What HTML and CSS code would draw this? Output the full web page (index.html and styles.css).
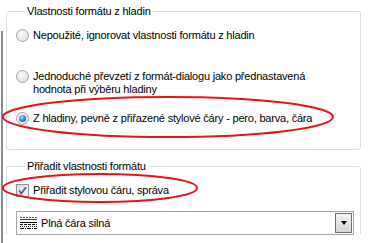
FILE: index.html
```html
<!DOCTYPE html>
<html>
<head>
<meta charset="utf-8">
<link rel="stylesheet" href="styles.css">
</head>
<body>
<div class="edge"></div>
<div class="page">
  <fieldset class="group g1">
    <legend>Vlastnosti formátu z hladin</legend>
    <div class="opt o1"><span class="radio"></span><span class="lbl">Nepoužité, ignorovat vlastnosti formátu z hladin</span></div>
    <div class="opt o2"><span class="radio"></span><span class="lbl">Jednoduché převzetí z formát-dialogu jako přednastavená<br>hodnota při výběru hladiny</span></div>
    <div class="opt o3"><span class="radio on"></span><span class="lbl">Z hladiny, pevně z přiřazené stylové čáry - pero, barva, čára</span></div>
  </fieldset>
  <fieldset class="group g2">
    <legend>Přiřadit vlastnosti formátu</legend>
    <div class="opt o4"><span class="check"><svg width="13" height="13" viewBox="0 0 13 13"><path d="M3 6.5 L5.3 9.5 L10 3.2" fill="none" stroke="#4a5fa8" stroke-width="1.8"/></svg></span><span class="lbl">Přiřadit stylovou čáru, správa</span></div>
    <div class="combo">
      <span class="ico"><svg width="17" height="14" viewBox="0 0 17 14">
        <path d="M0 1.5 H17" stroke="#d02020" stroke-dasharray="2 1"/>
        <path d="M0 3.5 H17" stroke="#2040c0"/>
        <path d="M0 6.5 H17" stroke="#101010"/>
        <path d="M0 8.5 H17" stroke="#101010" stroke-dasharray="3 1"/>
        <path d="M0 10.5 H17" stroke="#101010" stroke-dasharray="1 1"/>
        <path d="M0 12.5 H17" stroke="#101010" stroke-dasharray="4 1 1 1"/>
      </svg></span>
      <span class="val">Plná čára silná</span>
      <span class="btn"><span class="tri"></span></span>
    </div>
  </fieldset>
</div>
<svg class="marks" width="371" height="243" viewBox="0 0 371 243">
  <ellipse cx="168" cy="117" rx="165" ry="20" fill="none" stroke="#e8141b" stroke-width="2"/>
  <ellipse cx="100" cy="188" rx="97" ry="14" fill="none" stroke="#e8141b" stroke-width="2"/>
</svg>
</body>
</html>
```
FILE: styles.css
```css
html, body { margin: 0; padding: 0; background: #fff; }
body {
  width: 371px; height: 243px; overflow: hidden; position: relative;
  font-family: Tahoma, "Liberation Sans", Arial, sans-serif;
  font-size: 11px; letter-spacing: -0.2px; color: #000;
}
.edge {
  position: absolute; left: 1px; top: 31px; bottom: 0; width: 2px; background: #8c8c8c;
}
.page { padding: 5px 10px 0 6px; }
.group {
  margin: 0; border: 1px solid #d5dfe5; border-radius: 3px;
  padding: 0 6px 0 9px; min-width: 0;
}
.group legend { padding: 0 2px; margin-left: 9px; line-height: 13px; }
.g1 { padding-top: 11px; padding-bottom: 24px; }
.g2 { margin-top: 10px; padding-top: 11px; height: 62px; border-bottom: none; border-radius: 3px 3px 0 0; }
.opt { display: flex; align-items: flex-start; line-height: 13px; }
.opt .lbl { margin-left: 4px; }
.o2 { margin-top: 28px; }
.o3 { margin-top: 16px; }
.radio {
  width: 11px; height: 11px; border-radius: 50%; flex: none;
  border: 1px solid #a4a4a4;
  background: radial-gradient(circle at 40% 35%, #fcfcfc 0, #e6e6e6 60%, #d6d6d6 100%);
  position: relative;
}
.radio.on::after {
  content: ""; position: absolute; left: 2px; top: 2px; width: 7px; height: 7px; border-radius: 50%;
  background: radial-gradient(circle at 40% 35%, #a6e0ff 0, #2a8ad4 50%, #0b4f95 100%);
}
.check {
  width: 11px; height: 11px; flex: none; border: 1px solid #8e8f9f;
  background: linear-gradient(135deg, #dcdcdc, #f4f4f4);
  display: flex; align-items: center; justify-content: center; overflow: hidden;
}
.check svg { flex: none; }
.combo {
  margin-top: 14px; height: 22px; border: 1px solid #a6a6a6;
  display: flex; align-items: center; padding-left: 3px;
}
.ico { display: flex; width: 17px; height: 14px; }
.val { margin-left: 4px; flex: 1; }
.btn {
  width: 17px; height: 20px; margin-right: 1px; border: 1px solid #707070;
  background: linear-gradient(#f4f4f4, #d4d4d4);
  display: flex; align-items: center; justify-content: center; box-sizing: border-box;
}
.tri {
  width: 0; height: 0; border-left: 3.5px solid transparent; border-right: 3.5px solid transparent;
  border-top: 4px solid #000;
}
.marks { position: absolute; left: 0; top: 0; pointer-events: none; }
```
